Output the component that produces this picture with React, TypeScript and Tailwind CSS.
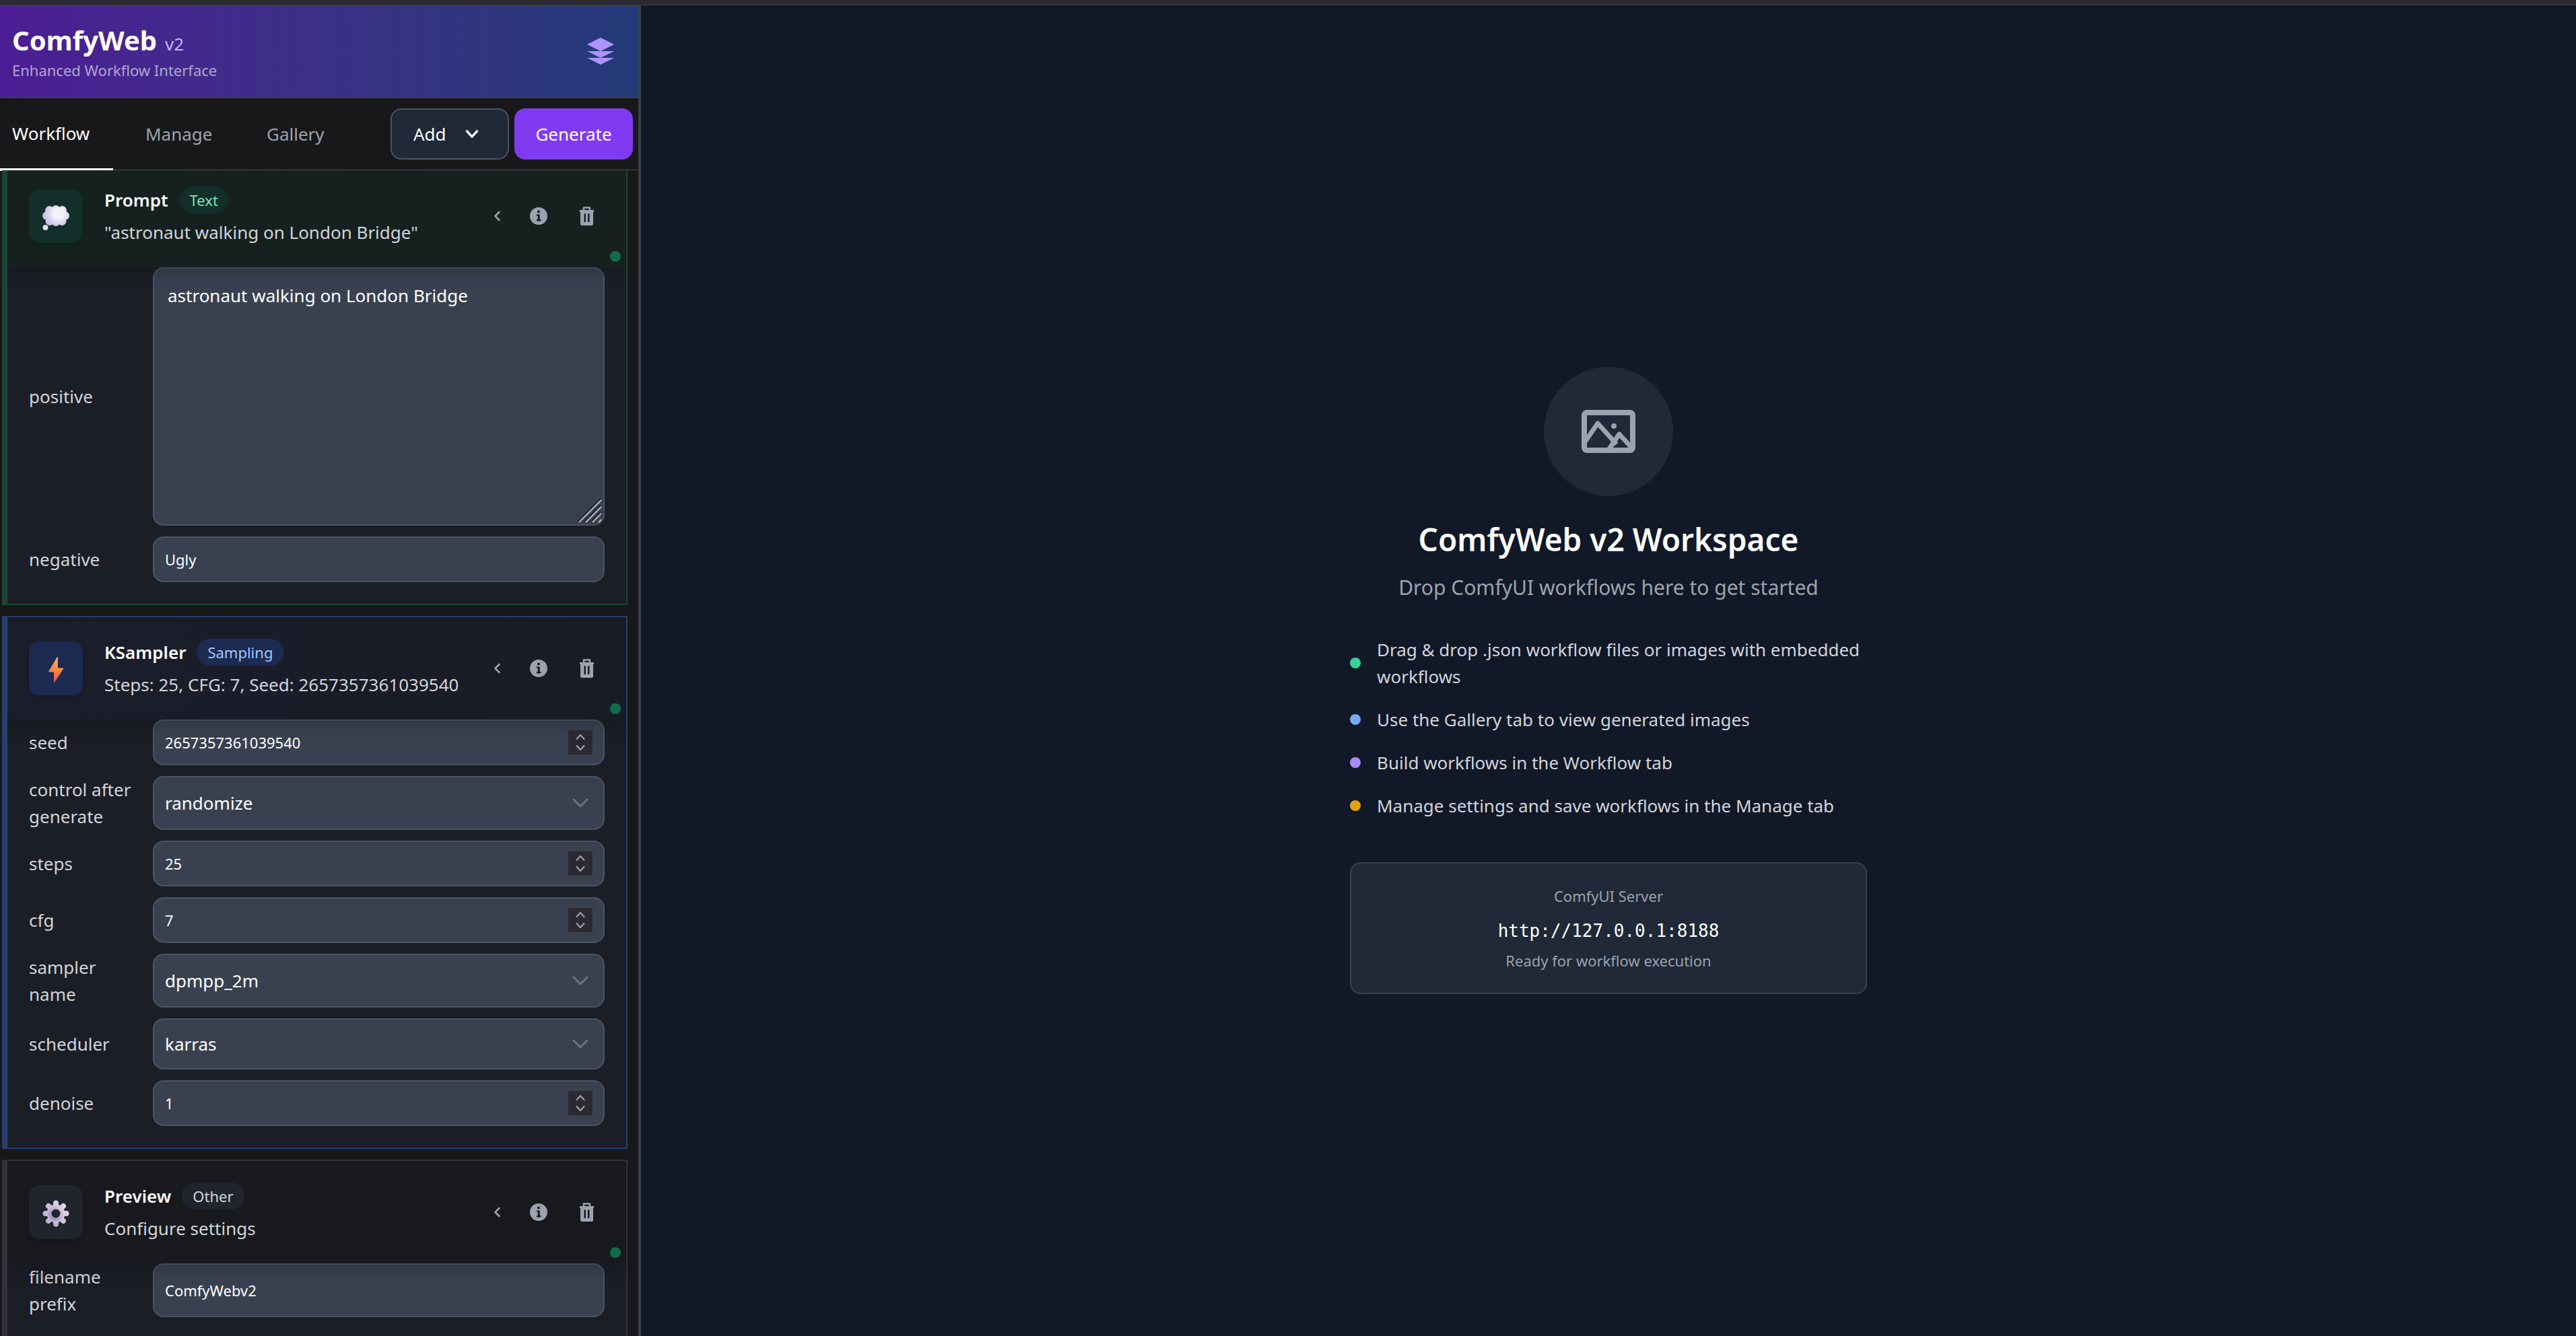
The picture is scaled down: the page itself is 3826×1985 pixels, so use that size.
import type { ReactNode } from "react";

type Tone = {
  card: string;
  header: string;
  tile: string;
  badge: string;
};

const tones: Record<string, Tone> = {
  text: {
    card: "border-[#1a4436]",
    header: "from-[#14211f] to-[#17201f]",
    tile: "bg-[#122f29]",
    badge: "bg-[#122f29] text-[#7ee2b8]",
  },
  sampling: {
    card: "border-[#263e6b]",
    header: "from-[#1b1d2b] to-[#191c26]",
    tile: "bg-[#1b2b52]",
    badge: "bg-[#1b2b52] text-[#a3c8ff]",
  },
  other: {
    card: "border-[#31323b]",
    header: "from-[#18191c] to-[#18191c]",
    tile: "bg-[#20242c]",
    badge: "bg-[#20242c] text-[#d1d5db]",
  },
};

const field =
  "w-full rounded-2xl border-2 border-[#4b5563] bg-[#394150] text-white outline-none";

function LayersIcon() {
  return (
    <svg viewBox="0 0 20 20" className="size-10 text-[#ad94fe]" fill="currentColor" aria-hidden="true">
      <path d="M10 0 20 5 10 10 0 5Z" />
      <path d="M0 10H20L10 15Z" />
      <path d="M0 15H20L10 20Z" />
    </svg>
  );
}

const cloudLobes = [
  [10.5, 7.5],
  [20, 6.5],
  [29.5, 7.5],
  [33.5, 15.5],
  [29, 23.5],
  [20, 24.5],
  [11, 23.5],
  [6.5, 15.5],
];

function ThoughtIcon() {
  return (
    <svg viewBox="0 0 40 40" className="mt-2 size-10" aria-hidden="true">
      <defs>
        <radialGradient id="cloud" gradientUnits="userSpaceOnUse" cx="24" cy="12" r="24">
          <stop offset="0.3" stopColor="#f4f1f8" />
          <stop offset="1" stopColor="#c3b4e6" />
        </radialGradient>
      </defs>
      <g fill="url(#cloud)">
        {cloudLobes.map(([x, y]) => (
          <circle key={`${x}-${y}`} cx={x} cy={y} r="6.5" />
        ))}
        <rect x="7" y="5" width="26" height="21" rx="6" />
      </g>
      <circle cx="4.500" cy="33" r="4" fill="#e6dff3" />
    </svg>
  );
}

function BoltIcon() {
  return (
    <svg viewBox="0 0 40 40" className="mt-1 size-10" aria-hidden="true">
      <defs>
        <linearGradient id="bolt" x1="0" y1="0" x2="0" y2="1">
          <stop offset="0" stopColor="#fdb544" />
          <stop offset="0.5" stopColor="#fb8a48" />
          <stop offset="1" stopColor="#f3415f" />
        </linearGradient>
      </defs>
      <path fill="url(#bolt)" stroke="url(#bolt)" strokeLinejoin="round" d="M22.500 1 9.500 23h8v16L31 18h-8.500Z" />
    </svg>
  );
}

function GearIcon() {
  return (
    <svg viewBox="0 0 40 40" className="mt-1 size-10" aria-hidden="true">
      <defs>
        <linearGradient id="gear" gradientUnits="userSpaceOnUse" x1="36" y1="4" x2="4" y2="36">
          <stop offset="0" stopColor="#e3dcea" />
          <stop offset="1" stopColor="#bba4d6" />
        </linearGradient>
        <linearGradient id="hub" x1="1" y1="0" x2="0" y2="1">
          <stop offset="0" stopColor="#d6cfdf" />
          <stop offset="1" stopColor="#9d8fae" />
        </linearGradient>
      </defs>
      <g stroke="url(#gear)" strokeWidth="8" strokeLinecap="round">
        <path d="m20 4.500.01 31M4.500 20l31 .01M9 9l22 22M31 9 9 31" />
      </g>
      <circle cx="20" cy="20" r="13.500" fill="url(#gear)" />
      <circle cx="20" cy="20" r="8.500" fill="none" stroke="url(#hub)" strokeWidth="5" />
      <circle cx="20" cy="20" r="6.500" fill="#20242c" />
    </svg>
  );
}

function Chevron({ className, d }: { className: string; d: string }) {
  return (
    <svg viewBox="0 0 24 24" className={className} fill="none" stroke="currentColor" strokeLinecap="round" strokeLinejoin="round" aria-hidden="true">
      <path d={d} />
    </svg>
  );
}

function InfoIcon() {
  return (
    <svg viewBox="0 0 26 26" className="size-[26px]" aria-hidden="true">
      <circle cx="13" cy="13" r="13" fill="currentColor" />
      <g fill="#171e20">
        <circle cx="13" cy="6.500" r="2" />
        <path d="M10 10.500h4.800v7.500h1.600v2.400h-6.400v-2.400h1.800v-5h-1.800Z" />
      </g>
    </svg>
  );
}

function TrashIcon() {
  return (
    <svg viewBox="0 0 21 28" className="h-7 w-[21px]" fill="none" stroke="currentColor" aria-hidden="true">
      <path d="M6 5V1.500h9V5" strokeWidth="2.500" strokeLinejoin="round" />
      <path d="M0 6.500h21" strokeWidth="3" />
      <path fill="currentColor" stroke="none" fillRule="evenodd" d="M1 8h19v17.500a2.500 2.500 0 0 1-2.500 2.500h-14A2.500 2.500 0 0 1 1 25.500Zm5.500 2.500v12.500h2.500v-12.500Zm5.500 0v12.500h2.500v-12.500Z" />
    </svg>
  );
}

function NodeCard(props: {
  tone: Tone;
  icon: ReactNode;
  title: string;
  category: string;
  summary: string;
  children: ReactNode;
}) {
  const { tone, icon, title, category, summary, children } = props;
  return (
    <section className={`overflow-hidden border-2 border-l-8 bg-[#1b1e26] ${tone.card}`}>
      <header className={`relative z-10 flex items-center bg-linear-to-r px-8 py-8 shadow-[0_8px_24px_rgba(0,0,0,0.2)] ${tone.header}`}>
        <div className={`flex size-20 shrink-0 items-center justify-center rounded-2xl shadow-md ${tone.tile}`}>{icon}</div>
        <div className="ml-8 min-w-0 flex-1">
          <div className="flex items-center gap-4">
            <h3 className="text-[26px] leading-10 font-semibold text-white">{title}</h3>
            <span className={`rounded-full px-4 text-[22px] leading-10 ${tone.badge}`}>{category}</span>
          </div>
          <p className="mt-2 truncate text-[26px] leading-10 text-[#d1d5db]">{summary}</p>
        </div>
        <div className="mr-4 flex items-center gap-12 text-[#9ca3af]">
          <button type="button" aria-label="Collapse" className="-mr-1 flex">
            <svg viewBox="0 0 9 16" className="h-4 w-[9px]" fill="none" stroke="currentColor" strokeWidth="2.500" strokeLinecap="round" strokeLinejoin="round" aria-hidden="true">
              <path d="M7.500 2 1.500 8l6 6" />
            </svg>
          </button>
          <button type="button" aria-label="Info" className="flex">
            <InfoIcon />
          </button>
          <button type="button" aria-label="Delete" className="flex">
            <TrashIcon />
          </button>
        </div>
        <span className="absolute right-2 bottom-2 size-4 rounded-full bg-[#116c4d]" />
      </header>
      <div className="flex flex-col gap-4 px-8 pb-8">{children}</div>
    </section>
  );
}

function Row({ id, label, children }: { id: string; label: string; children: ReactNode }) {
  return (
    <div className="flex gap-4">
      <label htmlFor={id} className="w-[168px] shrink-0 self-center text-[26px] leading-10 text-[#d1d5db]">
        {label}
      </label>
      <div className="relative flex min-w-0 flex-1">{children}</div>
    </div>
  );
}

function TextRow({ id, label, value }: { id: string; label: string; value: string }) {
  return (
    <Row id={id} label={label}>
      <input id={id} defaultValue={value} className={`min-h-[68px] px-4 text-[22px] ${field}`} />
    </Row>
  );
}

function NumberRow({ id, label, value }: { id: string; label: string; value: string }) {
  return (
    <Row id={id} label={label}>
      <input id={id} inputMode="numeric" defaultValue={value} className={`min-h-[68px] px-4 text-[22px] ${field}`} />
      <div className="absolute top-4 right-[18px] flex size-9 flex-col items-center justify-center gap-1 bg-[#2b2a33] text-[#a5a4ad]">
        <Chevron className="h-3 w-4 stroke-[4]" d="M1 18 12 6l11 12" />
        <Chevron className="h-3 w-4 stroke-[4]" d="m1 6 11 12L23 6" />
      </div>
    </Row>
  );
}

function SelectRow({ id, label, value }: { id: string; label: string; value: string }) {
  return (
    <Row id={id} label={label}>
      <select id={id} defaultValue={value} className={`min-h-[76px] appearance-none px-4 text-[26px] ${field}`}>
        <option>{value}</option>
      </select>
      <div className="pointer-events-none absolute inset-y-0 right-6 flex items-center text-[#6b7280]">
        <Chevron className="size-6 stroke-[3]" d="m2 7 10 10L22 7" />
      </div>
    </Row>
  );
}

const tips = [
  { dot: "bg-[#34d399]", text: "Drag & drop .json workflow files or images with embedded workflows" },
  { dot: "bg-[#74a9fb]", text: "Use the Gallery tab to view generated images" },
  { dot: "bg-[#a78bfa]", text: "Build workflows in the Workflow tab" },
  { dot: "bg-[#e5a00d]", text: "Manage settings and save workflows in the Manage tab" },
];

export default function App() {
  return (
    <div className="flex h-screen flex-col overflow-hidden bg-[#111827] font-['Noto_Sans','Open_Sans',sans-serif]">
      <div className="h-2 shrink-0 border-b border-[#3f3f46] bg-[#2b2a33]" />
      <div className="flex min-h-0 flex-1">
        <aside className="flex w-[952px] shrink-0 flex-col border-r-4 border-[#3f3f46] bg-[#18181a]">
          <header className="flex items-center justify-between border-b-2 border-[#3f3f46] bg-linear-to-r from-[#4c1d95] to-[#233a78] py-6 pr-9 pl-[18px]">
            <div>
              <h1 className="flex items-baseline gap-3 text-[40px] leading-[56px] font-bold text-white">
                ComfyWeb
                <span className="text-[26px] leading-8 font-normal text-[#c4b5fd]">v2</span>
              </h1>
              <p className="text-[22px] leading-8 text-[#b0a6cf]">Enhanced Workflow Interface</p>
            </div>
            <LayersIcon />
          </header>
          <nav className="flex h-[107px] shrink-0 items-center border-b border-[#454d5c] pr-2">
            <div className="flex flex-1 self-stretch text-[26px] text-[#9ca3af]">
              <button type="button" className="-mb-[2px] w-[168px] border-b-4 border-white pl-[18px] text-left text-white">
                Workflow
              </button>
              <button type="button" className="w-[180px] pl-12 text-left">
                Manage
              </button>
              <button type="button" className="pl-12 text-left">
                Gallery
              </button>
            </div>
            <div className="flex gap-2 text-[26px] text-white">
              <button type="button" className="flex h-[76px] w-[176px] items-center gap-7 rounded-2xl border-2 border-[#4b5563] bg-[#1f2937] pl-8">
                Add
                <Chevron className="size-5 stroke-[4]" d="m3 7 9 10 9-10" />
              </button>
              <button type="button" className="h-[76px] w-[176px] rounded-2xl bg-[#7f3af2]">
                Generate
              </button>
            </div>
          </nav>
          <div className="min-h-0 flex-1 overflow-hidden">
            <div className="-mt-[10px] mr-4 ml-[3px] flex flex-col gap-4">
              <NodeCard tone={tones.text} icon={<ThoughtIcon />} title="Prompt" category="Text" summary={'"astronaut walking on London Bridge"'}>
                <Row id="positive" label="positive">
                  <textarea id="positive" defaultValue="astronaut walking on London Bridge" className={`h-96 resize-none px-5 py-5 text-[26px] leading-10 ${field}`} />
                  <svg viewBox="0 0 36 36" className="pointer-events-none absolute right-1 bottom-1 size-9" fill="none" aria-hidden="true">
                    <path stroke="#1f2430" strokeWidth="2" d="M0 34 34 0M10 34 34 10M20 34 34 20" />
                    <path stroke="#b9bcc4" strokeWidth="2" d="M2 35 35 2M12 35 35 12M22 35 35 22M31 35l4-4" />
                  </svg>
                </Row>
                <TextRow id="negative" label="negative" value="Ugly" />
              </NodeCard>
              <NodeCard tone={tones.sampling} icon={<BoltIcon />} title="KSampler" category="Sampling" summary="Steps: 25, CFG: 7, Seed: 2657357361039540">
                <NumberRow id="seed" label="seed" value="2657357361039540" />
                <SelectRow id="control" label="control after generate" value="randomize" />
                <NumberRow id="steps" label="steps" value="25" />
                <NumberRow id="cfg" label="cfg" value="7" />
                <SelectRow id="sampler" label="sampler name" value="dpmpp_2m" />
                <SelectRow id="scheduler" label="scheduler" value="karras" />
                <NumberRow id="denoise" label="denoise" value="1" />
              </NodeCard>
              <NodeCard tone={tones.other} icon={<GearIcon />} title="Preview" category="Other" summary="Configure settings">
                <TextRow id="prefix" label="filename prefix" value="ComfyWebv2" />
              </NodeCard>
            </div>
          </div>
        </aside>
        <main className="flex min-w-0 flex-1 flex-col items-center justify-center pt-7">
          <div className="flex w-full max-w-3xl flex-col items-center">
            <div className="flex size-48 items-center justify-center rounded-full bg-[#1f2937] text-[#9ca3af]">
              <svg viewBox="0 0 80 64" className="h-16 w-20" fill="none" stroke="currentColor" aria-hidden="true">
                <rect x="4" y="4" width="72" height="56" rx="4" strokeWidth="8" />
                <path strokeWidth="7" strokeLinejoin="round" d="m4 49 20-29 28 31M39 61l17-25 20 22" />
                <circle cx="48" cy="24" r="4" fill="currentColor" stroke="none" />
              </svg>
            </div>
            <h2 className="mt-8 text-[46px] leading-[64px] font-semibold text-white">ComfyWeb v2 Workspace</h2>
            <p className="mt-4 text-[30px] leading-[48px] text-[#9ca3af]">Drop ComfyUI workflows here to get started</p>
            <ul className="mt-12 flex w-full flex-col gap-6 text-[26px] leading-10 text-[#d1d5db]">
              {tips.map((tip) => (
                <li key={tip.text} className="flex items-center gap-6">
                  <span className={`size-4 shrink-0 rounded-full ${tip.dot}`} />
                  <span>{tip.text}</span>
                </li>
              ))}
            </ul>
            <div className="mt-16 w-full rounded-2xl border-2 border-[#374151] bg-[#1f2937] p-8 text-center text-[22px] leading-8 text-[#9ca3af]">
              <p>ComfyUI Server</p>
              <p className="mt-4 font-['DejaVu_Sans_Mono',monospace] text-[26px] leading-10 text-white">http://127.0.0.1:8188</p>
              <p className="mt-2">Ready for workflow execution</p>
            </div>
          </div>
        </main>
      </div>
    </div>
  );
}
